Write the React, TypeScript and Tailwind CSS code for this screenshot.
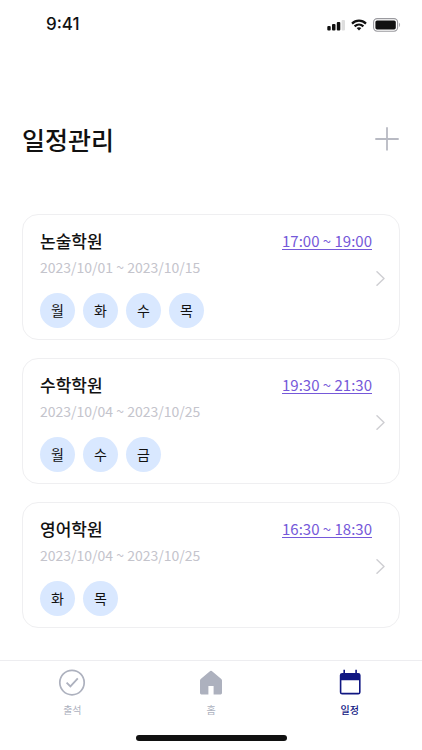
import type { ReactNode } from "react";

type Schedule = {
  name: string;
  period: string;
  time: string;
  days: string[];
};

const schedules: Schedule[] = [
  { name: "논술학원", period: "2023/10/01 ~ 2023/10/15", time: "17:00 ~ 19:00", days: ["월", "화", "수", "목"] },
  { name: "수학학원", period: "2023/10/04 ~ 2023/10/25", time: "19:30 ~ 21:30", days: ["월", "수", "금"] },
  { name: "영어학원", period: "2023/10/04 ~ 2023/10/25", time: "16:30 ~ 18:30", days: ["화", "목"] },
];

function StatusBar() {
  return (
    <div className="flex h-[50px] items-center justify-between pr-[21px] pl-[46px]">
      <span className="font-['Inter',sans-serif] text-[17px] font-medium text-[#111111]">9:41</span>
      <div className="flex items-center gap-[6px]">
        <svg width="18" height="12" viewBox="0 0 18 12" aria-hidden="true">
          <rect x="0.3" y="7" width="3.4" height="4.6" rx="1" fill="#111" />
          <rect x="5" y="5" width="3.5" height="6.6" rx="1" fill="#111" />
          <rect x="9.8" y="3" width="3.5" height="8.6" rx="1" fill="#111" />
          <rect x="14.6" y="1" width="3.4" height="10.6" rx="1" fill="#dedede" />
        </svg>
        <svg width="16" height="12" viewBox="0 0 16 12" aria-hidden="true" fill="none" stroke="#111" strokeWidth="2.2">
          <path d="M1 4.6C5 .6 11 .6 15 4.6" />
          <path d="M3.6 7.4C6.2 5 9.8 5 12.4 7.4" />
          <path d="M5.6 9.1C7 8 9 8 10.4 9.1L8 11.6Z" fill="#111" stroke="none" />
        </svg>
        <svg width="28" height="14" viewBox="0 0 28 14" aria-hidden="true">
          <rect x="0.6" y="0.6" width="24" height="12.6" rx="3.6" fill="none" stroke="#9a9a9f" strokeWidth="1.1" />
          <rect x="2.4" y="2.4" width="20.4" height="9" rx="1.6" fill="#111" />
          <path d="M26.2 4.8V9C27.4 8.4 27.4 5.4 26.2 4.8Z" fill="#9a9a9f" />
        </svg>
      </div>
    </div>
  );
}

function ScheduleCard({ name, period, time, days }: Schedule) {
  return (
    <li className="flex items-center rounded-2xl border border-[#efeff1] pt-[13px] pr-[14px] pb-[11px] pl-[17px]">
      <div className="flex-1">
        <div className="flex items-center justify-between">
          <h2 className="text-[17px] leading-[25px] font-medium text-[#111111]">{name}</h2>
          <a
            href="#time"
            className="text-[15px] leading-[25px] text-[#7559d9] underline decoration-1 underline-offset-2"
          >
            {time}
          </a>
        </div>
        <p className="text-sm leading-[29px] text-[#c4c4cc]">{period}</p>
        <ul className="mt-[11px] flex gap-2">
          {days.map((day) => (
            <li
              key={day}
              className="flex size-[35px] items-center justify-center rounded-full bg-[#d9e8ff] pb-0.5 text-sm text-[#111111]"
            >
              {day}
            </li>
          ))}
        </ul>
      </div>
      <button type="button" aria-label={`${name} 상세`} className="ml-1">
        <svg width="9" height="15" viewBox="0 0 9 15" fill="none" stroke="#cfcfd3" strokeWidth="1.5" aria-hidden="true">
          <path d="M1 .8L8 7.5L1 14.2" strokeLinecap="round" strokeLinejoin="round" />
        </svg>
      </button>
    </li>
  );
}

function Tab({ label, active, children }: { label: string; active?: boolean; children: ReactNode }) {
  return (
    <button
      type="button"
      className={`flex flex-1 flex-col items-center gap-[5px] text-[10px] leading-4 ${
        active ? "font-medium text-[#101782]" : "text-[#adb1be]"
      }`}
    >
      {children}
      <span>{label}</span>
    </button>
  );
}

export default function App() {
  return (
    <div className="flex min-h-screen flex-col bg-white font-['Noto_Sans_CJK_KR',sans-serif]">
      <StatusBar />
      <main className="flex-1 px-[22px] pt-[70px] pb-8">
        <header className="flex items-center justify-between">
          <h1 className="text-[25px] leading-[38px] font-medium text-[#111111]">일정관리</h1>
          <button type="button" aria-label="일정 추가">
            <svg width="25" height="24" viewBox="0 0 25 24" stroke="#b8bac3" strokeWidth="1.8" aria-hidden="true">
              <path d="M12 .3V23.5M.3 12H23.7" />
            </svg>
          </button>
        </header>
        <ul className="mt-14 flex flex-col gap-[18px]">
          {schedules.map((schedule) => (
            <ScheduleCard key={schedule.name} {...schedule} />
          ))}
        </ul>
      </main>
      <footer className="border-t border-[#ededf0]">
        <nav className="flex px-[3px] pt-2">
          <Tab label="출석">
            <svg width="28" height="28" viewBox="0 0 28 28" fill="none" stroke="currentColor" aria-hidden="true">
              <circle cx="14" cy="13.6" r="12.2" strokeWidth="1.7" />
              <path d="M8.6 13.6L12.4 17.4L19.8 9.4" strokeWidth="1.8" />
            </svg>
          </Tab>
          <Tab label="홈">
            <svg width="28" height="28" viewBox="0 0 28 28" fill="currentColor" aria-hidden="true">
              <path d="M13.2 2Q14 1.4 14.8 2L24.3 10Q25 10.6 25 11.5V24Q25 25.4 23.6 25.4H16.6V17H11.4V25.4H4.4Q3 25.4 3 24V11.5Q3 10.6 3.7 10Z" />
            </svg>
          </Tab>
          <Tab label="일정" active>
            <svg width="28" height="28" viewBox="0 0 28 28" fill="currentColor" aria-hidden="true">
              <path
                fillRule="evenodd"
                d="M7.4 .8H9V4H19.3V.8H20.9V4H22.2Q24.6 4 24.6 6.2V23.2Q24.6 25.4 22.2 25.4H6.2Q3.8 25.4 3.8 23.2V6.2Q3.8 4 6.2 4H7.4ZM5.4 11.2V23.8H23V11.2Z"
              />
            </svg>
          </Tab>
        </nav>
        <div className="mx-auto mt-[17px] mb-[9px] h-[6px] w-[151px] rounded-full bg-[#111111]" />
      </footer>
    </div>
  );
}
